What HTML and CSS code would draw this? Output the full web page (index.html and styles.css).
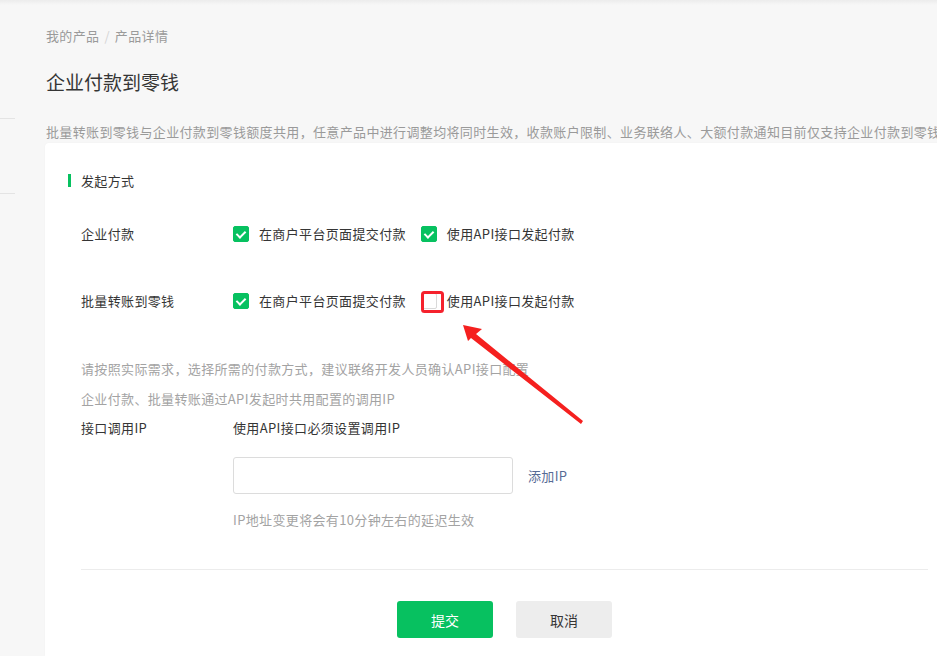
FILE: index.html
```html
<!DOCTYPE html>
<html lang="zh-CN">
<head>
  <meta charset="UTF-8" />
  <meta name="viewport" content="width=device-width, initial-scale=1" />
  <title>企业付款到零钱</title>
  <link rel="stylesheet" href="styles.css">
</head>
<body>
  <div class="topbar"></div>
  <div class="page">
    <aside class="sidebar">
      <div class="side-line first"></div>
      <div class="side-line"></div>
    </aside>

    <main class="main">
      <div class="breadcrumb">我的产品<span class="sep">/</span>产品详情</div>
      <h1 class="title">企业付款到零钱</h1>
      <p class="desc">批量转账到零钱与企业付款到零钱额度共用，任意产品中进行调整均将同时生效，收款账户限制、业务联络人、大额付款通知目前仅支持企业付款到零钱</p>

      <section class="card">
        <h2 class="section-title">发起方式</h2>

        <div class="form">
          <div class="row row-first">
            <div class="label">企业付款</div>
            <div class="options">
              <label class="option"><span class="check on"></span>在商户平台页面提交付款</label>
              <label class="option"><span class="check on"></span>使用API接口发起付款</label>
            </div>
          </div>

          <div class="row row-second">
            <div class="label">批量转账到零钱</div>
            <div class="options">
              <label class="option"><span class="check on"></span>在商户平台页面提交付款</label>
              <label class="option"><span class="check"></span>使用API接口发起付款</label>
            </div>
          </div>

          <p class="hint hint-first">请按照实际需求，选择所需的付款方式，建议联络开发人员确认API接口配置</p>
          <p class="hint hint-second">企业付款、批量转账通过API发起时共用配置的调用IP</p>

          <div class="row row-ip">
            <div class="label">接口调用IP</div>
            <div class="value">使用API接口必须设置调用IP</div>
          </div>

          <div class="ip-field">
            <input class="ip-input" type="text" />
            <a class="link" href="#">添加IP</a>
          </div>
          <p class="hint field-hint">IP地址变更将会有10分钟左右的延迟生效</p>

          <div class="divider"></div>

          <div class="actions">
            <button class="btn btn-primary">提交</button>
            <button class="btn btn-default">取消</button>
          </div>
        </div>
      </section>
    </main>
  </div>

  <!-- annotation drawn on top of the screenshot -->
  <svg class="markup" viewBox="0 0 937 656">
    <rect x="422.5" y="292.5" width="20" height="19" rx="2" fill="none" stroke="#f5222d" stroke-width="3" />
    <polygon fill="#f5201f" points="463,325 482,329 476,334 583,421 581,424 471,338 468,341" />
  </svg>
</body>
</html>
```

FILE: styles.css
```css
body {
  margin: 0;
  background-color: #f7f7f7;
  font-family: "Noto Sans CJK SC", "Noto Sans", sans-serif;
  font-size: 13px;
  letter-spacing: 0.35px;
  color: #353535;
  overflow: hidden;
  height: 656px;
  position: relative;
}

.topbar {
  position: absolute;
  top: 0;
  left: 0;
  right: 0;
  height: 5px;
  background: linear-gradient(#ececec, rgba(247,247,247,0));
}

.page {
  display: flex;
}

.sidebar {
  width: 15px;
  flex: none;
  padding-top: 118px;
}

.side-line {
  height: 1px;
  background-color: #e4e4e4;
}

.side-line.first {
  margin-bottom: 74px;
}

.main {
  margin-left: 30px;
  padding-top: 26px;
  width: 905px;
  flex: none;
}

.breadcrumb {
  line-height: 20px;
  color: #9a9a9a;
  padding-left: 1px;
}

.breadcrumb .sep {
  color: #d4d4d4;
  margin: 0 5px;
}

.title {
  margin: 22px 0 0;
  font-size: 19px;
  font-weight: normal;
  letter-spacing: 0;
  line-height: 28px;
  padding-left: 1px;
}

.desc {
  margin: 26px 0 0;
  line-height: 20px;
  color: #9a9a9a;
  white-space: nowrap;
  padding-left: 1px;
}

.card {
  margin-top: 1px;
  background-color: #fff;
  border-radius: 4px 0 0 0;
  box-shadow: 0 0 2px rgba(0,0,0,0.04);
  padding: 28px 22px 0 23px;
  height: 485px;
}

.section-title {
  margin: 0;
  font-size: 13px;
  font-weight: normal;
  line-height: 20px;
  padding-left: 13px;
  position: relative;
}

.section-title::before {
  content: "";
  position: absolute;
  left: 0;
  top: 3px;
  width: 3px;
  height: 13px;
  background-color: #07c160;
}

.form {
  margin-left: 13px;
}

.row {
  display: flex;
  align-items: center;
  line-height: 20px;
}

.row-first {
  margin-top: 33px;
}

.row-second {
  margin-top: 47px;
}

.row-ip {
  margin-top: 9px;
}

.label {
  width: 152px;
  flex: none;
}

.options {
  display: flex;
  gap: 15px;
}

.option {
  display: flex;
  align-items: center;
  gap: 10px;
}

.check {
  width: 14px;
  height: 14px;
  border: 1px solid #d9d9d9;
  border-radius: 2px;
  background-color: #fff;
  position: relative;
}

.check.on {
  background-color: #07c160;
  border-color: #07c160;
}

.check.on::after {
  content: "";
  position: absolute;
  left: 4px;
  top: 2px;
  width: 4px;
  height: 7px;
  border: solid #fff;
  border-width: 0 2px 2px 0;
  transform: rotate(45deg);
}

.hint {
  margin: 0;
  line-height: 20px;
  color: #a3a3a3;
}

.hint-first {
  margin-top: 48px;
}

.hint-second {
  margin-top: 10px;
}

.ip-field {
  display: flex;
  align-items: center;
  gap: 15px;
  margin: 19px 0 0 152px;
}

.ip-input {
  box-sizing: border-box;
  width: 280px;
  height: 37px;
  border: 1px solid #dcdcdc;
  border-radius: 3px;
  outline: none;
  padding: 0 10px;
  font: inherit;
}

.link {
  color: #576b95;
  text-decoration: none;
  line-height: 20px;
}

.field-hint {
  margin: 16px 0 0 152px;
}

.divider {
  height: 1px;
  background-color: #ececec;
  margin-top: 39px;
}

.actions {
  display: flex;
  justify-content: center;
  gap: 23px;
  margin-top: 31px;
}

.btn {
  width: 96px;
  height: 37px;
  border: 0;
  border-radius: 3px;
  font: inherit;
  font-size: 14px;
}

.btn-primary {
  background-color: #07c160;
  color: #fff;
}

.btn-default {
  background-color: #ededed;
  color: #353535;
}

.markup {
  position: absolute;
  top: 0;
  left: 0;
  width: 937px;
  height: 656px;
  pointer-events: none;
}
```
